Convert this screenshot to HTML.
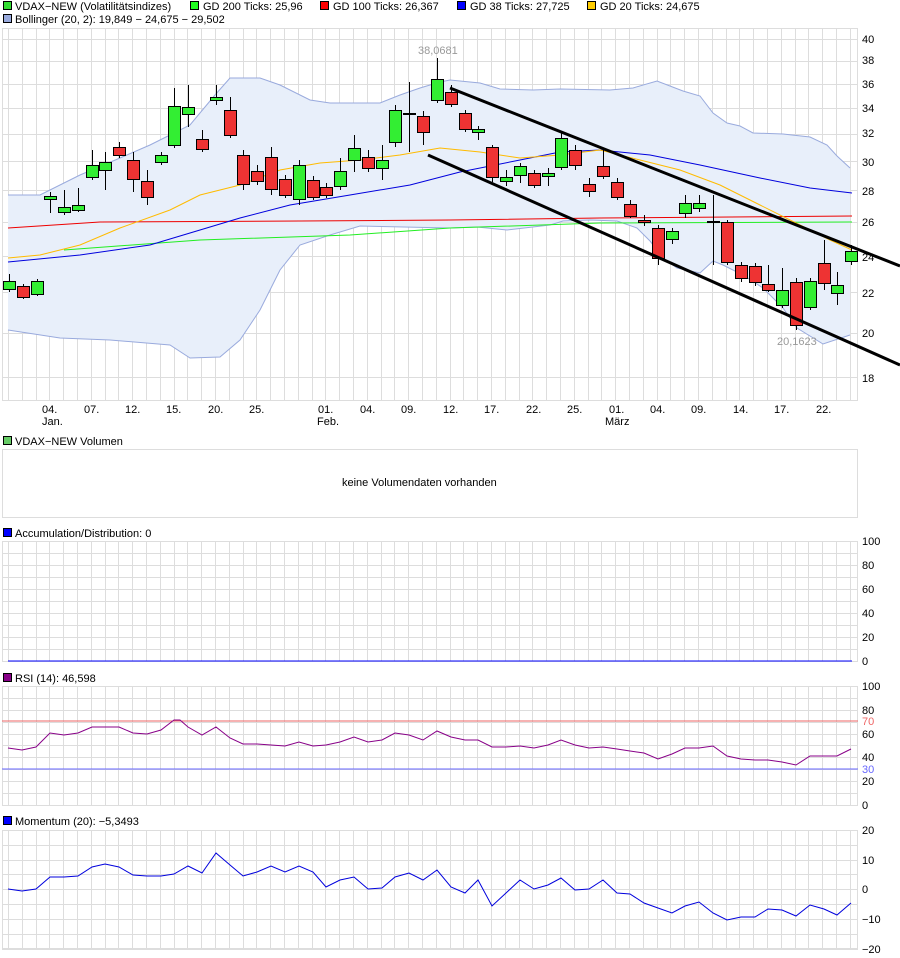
<!DOCTYPE html>
<html><head><meta charset="utf-8"><style>
body{margin:0;background:#fff;width:900px;height:958px;overflow:hidden;font-family:"Liberation Sans",sans-serif}
svg{position:absolute;left:0;top:0}
text{font-family:"Liberation Sans",sans-serif;font-size:11px;fill:#000}
</style></head><body>
<svg id="s" width="900" height="958" viewBox="0 0 900 958">
<g id="grid"></g>
<rect x="3.5" y="1.5" width="8" height="8" fill="#33dd33" stroke="#000"/><text x="15" y="10">VDAX−NEW (Volatilitätsindizes)</text>
<rect x="190.5" y="1.5" width="8" height="8" fill="#22ff22" stroke="#000"/><text x="203" y="10">GD 200 Ticks: 25,96</text>
<rect x="320.5" y="1.5" width="8" height="8" fill="#ff0000" stroke="#000"/><text x="333" y="10">GD 100 Ticks: 26,367</text>
<rect x="457.5" y="1.5" width="8" height="8" fill="#0000ff" stroke="#000"/><text x="470" y="10">GD 38 Ticks: 27,725</text>
<rect x="587.5" y="1.5" width="8" height="8" fill="#ffcc00" stroke="#000"/><text x="600" y="10">GD 20 Ticks: 24,675</text>
<rect x="3.5" y="14.5" width="8" height="8" fill="#99aadd" stroke="#000"/><text x="15" y="23">Bollinger (20, 2): 19,849 − 24,675 − 29,502</text>
<g id="main"></g>
<g font-size="11">
<text x="862" y="43">40</text><text x="862" y="64">38</text><text x="862" y="88">36</text><text x="862" y="112">34</text><text x="862" y="137">32</text><text x="862" y="166">30</text><text x="862" y="195">28</text><text x="862" y="226">26</text><text x="862" y="261">24</text><text x="862" y="297">22</text><text x="862" y="337">20</text><text x="862" y="382">18</text>
</g>
<text x="418" y="54" style="fill:#999">38,0681</text>
<text x="777" y="345" style="fill:#999">20,1623</text>
<g>
<text x="42" y="413">04.</text><text x="42" y="425">Jan.</text>
<text x="84" y="413">07.</text><text x="125" y="413">12.</text><text x="166" y="413">15.</text><text x="208" y="413">20.</text><text x="249" y="413">25.</text>
<text x="318" y="413">01.</text><text x="317" y="425">Feb.</text>
<text x="360" y="413">04.</text><text x="401" y="413">09.</text><text x="443" y="413">12.</text><text x="484" y="413">17.</text><text x="526" y="413">22.</text><text x="567" y="413">25.</text>
<text x="609" y="413">01.</text><text x="605" y="425">März</text>
<text x="650" y="413">04.</text><text x="691" y="413">09.</text><text x="733" y="413">14.</text><text x="774" y="413">17.</text><text x="816" y="413">22.</text>
</g>
<rect x="3.5" y="436.5" width="8" height="8" fill="#66cc66" stroke="#000"/><text x="15" y="445">VDAX−NEW Volumen</text>
<rect x="2.5" y="449.5" width="855" height="68" fill="none" stroke="#ddd"/>
<text x="342" y="486" font-size="12">keine Volumendaten vorhanden</text>
<rect x="3.5" y="528.5" width="8" height="8" fill="#0000ff" stroke="#000"/><text x="15" y="537">Accumulation/Distribution: 0</text>
<text x="862" y="545">100</text><text x="862" y="569">80</text><text x="862" y="593">60</text><text x="862" y="617">40</text><text x="862" y="641">20</text><text x="862" y="665">0</text>
<line x1="8" y1="661" x2="852" y2="661" stroke="#0000ff"/>
<rect x="3.5" y="673.5" width="8" height="8" fill="#880088" stroke="#000"/><text x="15" y="682">RSI (14): 46,598</text>
<line x1="2" y1="721" x2="858" y2="721" stroke="#ee6666"/>
<line x1="2" y1="769" x2="858" y2="769" stroke="#6666ff"/>
<text x="862" y="690">100</text><text x="862" y="714">80</text><text x="862" y="725" style="fill:#ee6666">70</text><text x="862" y="738">60</text><text x="862" y="761">40</text><text x="862" y="773" style="fill:#6666ff">30</text><text x="862" y="785">20</text><text x="862" y="809">0</text>
<rect x="3.5" y="816.5" width="8" height="8" fill="#0000ff" stroke="#000"/><text x="15" y="825">Momentum (20): −5,3493</text>
<text x="862" y="834">20</text><text x="862" y="864">10</text><text x="862" y="893">0</text><text x="862" y="923">−10</text><text x="862" y="953">−20</text>
<g id="ind"></g>
</svg>
<script>
var NS="http://www.w3.org/2000/svg";
function el(p,t,a){var e=document.createElementNS(NS,t);for(var k in a)e.setAttribute(k,a[k]);p.appendChild(e);return e;}
var g=document.getElementById('grid');
function panel(y0,y1,hs){
  el(g,'rect',{x:2.5,y:y0+.5,width:855,height:y1-y0,fill:'none',stroke:'#ddd'});
  for(var x=8;x<858;x+=13.8)el(g,'line',{x1:Math.round(x)+.5,y1:y0,x2:Math.round(x)+.5,y2:y1,stroke:'#ddd'});
  hs.forEach(function(y){el(g,'line',{x1:2,y1:y+.5,x2:858,y2:y+.5,stroke:'#ddd'});});
}
var mh=[];[18,20,22,24,26,28,30,32,34,36,38,40].forEach(function(v){mh.push(Math.round(1603-424*Math.log(v)));});
panel(28,400,mh);
var h=[];for(var y=541;y<=661;y+=12)h.push(y);panel(541,661,h);
h=[];for(var y=686;y<=805;y+=11.9)h.push(Math.round(y));panel(686,805,h);
h=[];for(var y=830;y<=949;y+=14.8)h.push(Math.round(y));panel(830,949,h);
var m=document.getElementById('main');
function pts(a){var s=[];for(var i=0;i<a.length;i+=2)s.push(a[i]+','+a[i+1]);return s.join(' ');}
var up=[8,195,40,195,80,175,120,158,150,145,190,125,215,95,230,78,260,78,280,85,310,100,330,103,380,103,400,95,420,88,440,82,450,80,480,83,500,89,533,90,560,89,610,90,633,88,657,81,683,91,700,96,713,113,727,123,740,126,753,133,783,134,810,137,827,145,837,156,850,168];
var lo=[8,330,60,338,110,340,170,345,190,358,220,357,240,340,260,310,280,270,300,245,330,235,360,226,450,228,477,227,507,230,550,225,563,221,590,220,617,221,637,228,650,241,663,258,677,268,700,273,713,261,723,265,743,275,763,288,783,308,797,328,823,344,850,335];
var poly=[];for(var i=0;i<up.length;i+=2)poly.push(up[i]+','+up[i+1]);for(var i=lo.length-2;i>=0;i-=2)poly.push(lo[i]+','+lo[i+1]);
el(m,'polygon',{points:poly.join(' '),fill:'#e8effa',stroke:'none'});
el(m,'polyline',{points:pts(up),fill:'none',stroke:'#99aadd'});
el(m,'polyline',{points:pts(lo),fill:'none',stroke:'#99aadd'});
el(m,'polyline',{points:pts([64,250,200,240,350,235,450,228,600,223,852,222]),fill:'none',stroke:'#22ee22'});
el(m,'polyline',{points:pts([8,228,100,222,300,221,450,220,600,218,852,216]),fill:'none',stroke:'#ee0000'});
el(m,'polyline',{points:pts([8,262,80,255,150,245,200,230,240,218,290,205,350,195,410,185,460,172,520,160,560,152,600,150,650,155,700,165,760,178,810,188,852,193]),fill:'none',stroke:'#0000dd'});
el(m,'polyline',{points:pts([8,258,40,255,80,245,120,228,170,210,200,195,240,185,280,170,320,163,360,160,400,155,440,148,480,152,520,158,560,155,600,150,640,160,680,170,720,185,760,205,800,225,830,240,852,250]),fill:'none',stroke:'#ffbb00'});
var C=[[9,281,289,274,292,'g'],[23,286,297,284,299,'r'],[37,281,294,279,296,'g'],[50,196,199,192,213,'g'],[64,207,212,190,215,'g'],[78,205,210,188,212,'g'],[92,165,177,150,180,'g'],[105,162,170,152,190,'g'],[119,147,155,142,158,'r'],[133,160,179,152,192,'r'],[147,181,197,170,205,'r'],[161,155,162,152,165,'g'],[174,106,145,88,148,'g'],[188,107,114,85,127,'g'],[202,139,149,130,152,'r'],[216,97,100,85,105,'g'],[230,110,135,97,138,'r'],[243,155,184,150,190,'r'],[257,171,181,165,185,'r'],[271,157,189,147,195,'r'],[285,179,195,175,198,'r'],[299,165,199,160,205,'g'],[313,180,197,176,200,'r'],[326,187,195,183,198,'r'],[340,171,186,158,190,'g'],[354,148,160,135,172,'g'],[368,157,168,150,172,'r'],[382,160,168,145,180,'g'],[395,110,142,105,147,'g'],[409,113,114,82,152,'d'],[423,116,132,111,145,'r'],[437,79,100,58,103,'g'],[451,92,104,85,107,'r'],[465,113,129,110,132,'r'],[478,129,132,126,140,'g'],[492,147,177,145,182,'r'],[506,177,181,170,186,'g'],[520,166,175,163,183,'g'],[534,173,185,170,188,'r'],[548,173,176,168,186,'g'],[561,138,167,132,170,'g'],[575,150,165,145,170,'r'],[589,184,191,178,197,'r'],[603,166,176,150,179,'r'],[617,182,197,178,200,'r'],[630,204,216,200,218,'r'],[644,220,222,215,226,'r'],[658,228,258,225,265,'r'],[672,231,239,228,244,'g'],[685,203,213,195,218,'g'],[699,203,208,195,212,'g'],[713,221,222,195,265,'d'],[727,222,262,220,265,'r'],[741,265,278,262,282,'r'],[755,266,282,263,286,'r'],[768,284,290,265,292,'r'],[782,290,305,268,308,'g'],[796,282,325,278,330,'r'],[810,281,307,278,310,'g'],[824,263,283,240,290,'r'],[837,285,293,272,305,'g'],[851,251,261,245,265,'g']];
C.forEach(function(c){
  el(m,'line',{x1:c[0]+.5,y1:c[3],x2:c[0]+.5,y2:c[4],stroke:'#000'});
  var f=c[5]=='g'?'#33ee33':c[5]=='r'?'#ee3333':'#000';
  el(m,'rect',{x:c[0]-5.5,y:c[1]+.5,width:12,height:Math.max(1,c[2]-c[1]),fill:f,stroke:'#000'});
});
el(m,'line',{x1:450,y1:88,x2:900,y2:266,stroke:'#000','stroke-width':3});
el(m,'line',{x1:428,y1:155,x2:900,y2:365,stroke:'#000','stroke-width':3});
var I=document.getElementById('ind');
var rsi=[8,748,22,750,36,747,50,733,64,735,78,733,92,727,105,727,119,727,133,733,147,734,161,730,174,720,180,720,188,727,202,735,216,727,230,738,243,744,257,744,271,745,285,746,299,742,313,746,326,745,340,742,354,737,368,742,382,740,395,733,409,735,423,740,437,731,451,737,465,740,478,740,492,747,506,747,520,746,534,748,548,745,561,740,575,745,589,748,603,747,617,749,630,751,644,753,658,759,672,754,685,748,699,748,713,746,727,756,741,759,755,760,768,760,782,762,796,765,810,756,824,756,837,756,851,749];
el(I,'polyline',{points:pts(rsi),fill:'none',stroke:'#880088'});
var mo=[8,889,22,891,36,889,50,877,64,877,78,876,92,867,105,864,119,867,133,875,147,876,161,876,174,874,188,866,202,873,216,853,230,865,243,876,257,872,271,866,285,872,299,866,313,872,326,887,340,880,354,877,368,889,382,888,395,877,409,873,423,880,437,870,451,887,465,893,478,880,492,906,506,893,520,880,534,889,548,885,561,878,575,890,589,889,603,880,617,893,630,894,644,903,658,908,672,913,685,906,699,902,713,913,727,920,741,917,755,917,768,909,782,910,796,916,810,905,824,909,837,915,851,903];
el(I,'polyline',{points:pts(mo),fill:'none',stroke:'#0000dd'});
</script>
</body></html>
